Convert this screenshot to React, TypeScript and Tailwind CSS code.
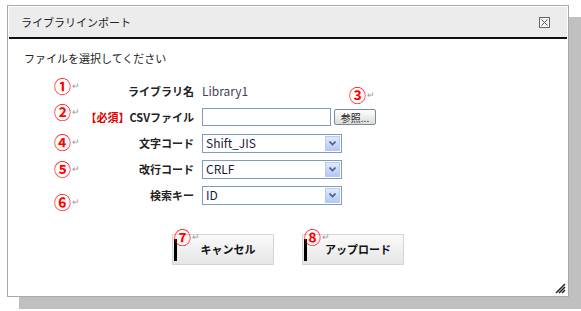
import React from 'react';

const jp = { fontFamily: '"Noto Sans CJK JP", "Liberation Sans", sans-serif' };

function Mark({ n }: { n: string }) {
  return (
    <span className="inline-flex items-center leading-none">
      <span className="text-[17px] font-bold leading-none text-[#ff0000]">{n}</span>
      <span className="ml-px text-[9px] leading-none text-[#999]">↵</span>
    </span>
  );
}

function Select({ value }: { value: string }) {
  return (
    <div className="flex h-[19px] w-[140px] items-center border border-[#7f9db9] bg-white">
      <span className="flex-1 pl-[3px] text-[12px] leading-none text-[#1a1a40]">{value}</span>
      <span className="mr-px flex h-[15px] w-[15px] items-center justify-center border border-[#b9c9ef] bg-gradient-to-b from-[#e1eafe] to-[#b4c8f5]">
        <svg width="7" height="5" viewBox="0 0 7 5">
          <path d="M0.5 0.5 L3.5 3.5 L6.5 0.5" fill="none" stroke="#4d6185" strokeWidth="1.6" />
        </svg>
      </span>
    </div>
  );
}

function PushButton({ label, mark }: { label: string; mark: string }) {
  return (
    <div className="relative">
      <div className="flex h-[31px] w-[102px] items-center border border-[#d4d4d4] bg-gradient-to-b from-[#fafafa] to-[#e6e6e6]">
        <span className="ml-px h-[22px] w-[3px] bg-black" />
        <span className="flex-1 pl-[6px] text-center text-[11px] font-bold text-[#111]">{label}</span>
      </div>
      <div className="absolute -top-[9px] left-[2px]">
        <Mark n={mark} />
      </div>
    </div>
  );
}

function Row({ mark, markShift, label, children }: { mark: string; markShift: string; label: React.ReactNode; children: React.ReactNode }) {
  return (
    <div className="flex h-[26px] items-center">
      <div className={`w-[46px] pl-[45px] ${markShift}`}>
        <Mark n={mark} />
      </div>
      <div className="w-[139px] text-right text-[11px] font-bold text-[#222]">{label}</div>
      <div className="ml-[8px] flex items-center">{children}</div>
    </div>
  );
}

export default function App() {
  return (
    <div className="h-[311px] w-[581px] bg-white" style={jp}>
      <div className="ml-[7px] mt-[5px] flex h-[292px] w-[562px] flex-col border border-[#a8a8a8] bg-white p-px shadow-[12px_12px_0_#c0c0c0]">
        <div className="flex h-[30px] items-center justify-between bg-[#ececec] pl-[12px] pr-[17px]">
          <span className="text-[11px] text-[#222]">ライブラリインポート</span>
          <svg width="11" height="11" viewBox="0 0 11 11">
            <rect x="0.5" y="0.5" width="10" height="10" fill="#f4f4f4" stroke="#666" />
            <path d="M2.5 2.5 L8.5 8.5 M8.5 2.5 L2.5 8.5" stroke="#555" strokeWidth="1" />
          </svg>
        </div>
        <div className="h-[2px] bg-[#111]" />
        <div className="relative flex flex-1 flex-col">
          <p className="ml-[15px] mt-[14px] text-[11px] leading-none text-[#222]">ファイルを選択してください</p>
          <div className="mt-[14px] flex flex-col">
            <Row mark="①" markShift="-mt-[10px]" label="ライブラリ名">
              <span className="text-[12px] text-[#44405a]">Library1</span>
            </Row>
            <Row mark="②" markShift="-mt-[10px]" label={<><span className="text-[#e00000]">【必須】</span>CSVファイル</>}>
              <div className="h-[18px] w-[129px] border border-[#7f9db9] bg-white" />
              <div className="relative ml-[3px]">
                <div className="flex h-[16px] w-[42px] items-center justify-center rounded-[2px] border border-[#7a8a99] bg-gradient-to-b from-[#ffffff] to-[#dcdcd8] text-[10px] text-[#222]">
                  参照...
                </div>
                <div className="absolute -top-[26px] left-[15px]">
                  <Mark n="③" />
                </div>
              </div>
            </Row>
            <Row mark="④" markShift="-mt-[2px]" label="文字コード">
              <Select value="Shift_JIS" />
            </Row>
            <Row mark="⑤" markShift="mt-0" label="改行コード">
              <Select value="CRLF" />
            </Row>
            <Row mark="⑥" markShift="mt-[14px]" label="検索キー">
              <Select value="ID" />
            </Row>
          </div>
          <div className="mt-[26px] flex gap-[28px] pl-[163px]">
            <PushButton label="キャンセル" mark="⑦" />
            <PushButton label="アップロード" mark="⑧" />
          </div>
          <svg className="absolute bottom-[1px] right-[1px]" width="11" height="11" viewBox="0 0 11 11">
            <path d="M10 1 L1 10 M10 4 L4 10 M10 7 L7 10" stroke="#222" strokeWidth="1.5" />
          </svg>
        </div>
      </div>
    </div>
  );
}
